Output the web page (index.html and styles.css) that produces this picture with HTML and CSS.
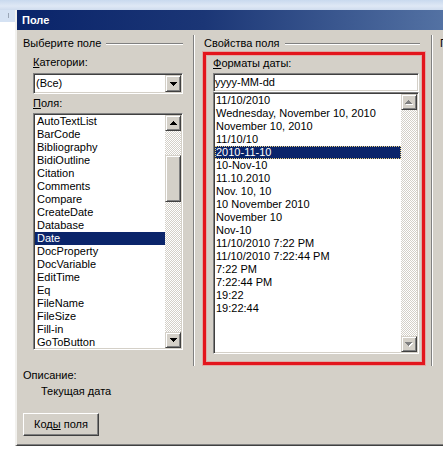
FILE: index.html
```html
<!DOCTYPE html>
<html>
<head>
<meta charset="utf-8">
<link rel="stylesheet" href="styles.css">
</head>
<body>
<div class="topstrip"></div>
<div class="row">
  <div class="parent-side"><span class="tick"></span></div>
  <div class="dialog">
    <div class="titlebar">Поле</div>
    <div class="main">
      <div class="col-left">
        <div class="group-head"><span>Выберите поле</span><i class="etch"></i></div>
        <div class="left-body">
          <div class="label first"><u>К</u>атегории:</div>
          <div class="combo">
            <span class="combo-val">(Все)</span>
            <span class="sbtn cbtn"><svg width="7" height="4" viewBox="0 0 7 4"><path d="M0 0h7v1H6v1H5v1H4v1H3V3H2V2H1V1H0z"/></svg></span>
          </div>
          <div class="label"><u>П</u>оля:</div>
          <div class="listbox left-list">
            <div class="items pl2">
              <div class="item">AutoTextList</div>
              <div class="item">BarCode</div>
              <div class="item">Bibliography</div>
              <div class="item">BidiOutline</div>
              <div class="item">Citation</div>
              <div class="item">Comments</div>
              <div class="item">Compare</div>
              <div class="item">CreateDate</div>
              <div class="item">Database</div>
              <div class="item sel">Date</div>
              <div class="item">DocProperty</div>
              <div class="item">DocVariable</div>
              <div class="item">EditTime</div>
              <div class="item">Eq</div>
              <div class="item">FileName</div>
              <div class="item">FileSize</div>
              <div class="item">Fill-in</div>
              <div class="item">GoToButton</div>
            </div>
            <div class="vscroll">
              <span class="sbtn"><svg width="7" height="4" viewBox="0 0 7 4"><path d="M3 0h1v1h1v1h1v1h1v1H0V3h1V2h1V1h1z"/></svg></span>
              <span class="track"><span class="thumb"></span></span>
              <span class="sbtn"><svg width="7" height="4" viewBox="0 0 7 4"><path d="M0 0h7v1H6v1H5v1H4v1H3V3H2V2H1V1H0z"/></svg></span>
            </div>
          </div>
        </div>
      </div>
      <div class="vsep"></div>
      <div class="col-right">
        <div class="group-head rh"><span>Свойства поля</span><i class="etch"></i></div>
        <div class="redbox">
          <div class="label top"><u>Ф</u>орматы даты:</div>
          <div class="textbox">yyyy-MM-dd</div>
          <div class="listbox right-list">
            <div class="items pl1">
              <div class="item">11/10/2010</div>
              <div class="item">Wednesday, November 10, 2010</div>
              <div class="item">November 10, 2010</div>
              <div class="item">11/10/10</div>
              <div class="item sel focus">2010-11-10</div>
              <div class="item">10-Nov-10</div>
              <div class="item">11.10.2010</div>
              <div class="item">Nov. 10, 10</div>
              <div class="item">10 November 2010</div>
              <div class="item">November 10</div>
              <div class="item">Nov-10</div>
              <div class="item">11/10/2010 7:22 PM</div>
              <div class="item">11/10/2010 7:22:44 PM</div>
              <div class="item">7:22 PM</div>
              <div class="item">7:22:44 PM</div>
              <div class="item">19:22</div>
              <div class="item">19:22:44</div>
            </div>
            <div class="vscroll">
              <span class="sbtn"><svg width="8" height="5" viewBox="0 0 8 5"><path fill="#fff" d="M4 1h1v1h1v1h1v1h1v1H1V4h1V3h1V2h1z"/><path fill="#808080" d="M3 0h1v1h1v1h1v1h1v1H0V3h1V2h1V1h1z"/></svg></span>
              <span class="track"></span>
              <span class="sbtn"><svg width="8" height="5" viewBox="0 0 8 5"><path fill="#fff" d="M1 1h7v1H7v1H6v1H5v1H4V4H3V3H2V2H1z"/><path fill="#808080" d="M0 0h7v1H6v1H5v1H4v1H3V3H2V2H1V1H0z"/></svg></span>
            </div>
          </div>
        </div>
      </div>
      <div class="vsep"></div>
      <div class="col-third">
        <div class="group-head"><span>Параметры поля</span></div>
      </div>
    </div>
    <div class="bottom">
      <div class="desc-label">Описание:</div>
      <div class="desc-text">Текущая дата</div>
      <div class="button">Код<u>ы</u> поля</div>
    </div>
  </div>
</div>
</body>
</html>
```

FILE: styles.css
```css
* { box-sizing: border-box; }
html, body { margin: 0; padding: 0; }
body {
  width: 443px;
  height: 455px;
  overflow: hidden;
  background: #fff;
  font-family: "Liberation Sans", Arial, sans-serif;
  font-size: 11px;
  line-height: 13px;
  color: #000;
}
u { text-decoration: underline; text-underline-offset: 1px; }

.topstrip {
  height: 10px;
  background: linear-gradient(#c9d9ee, #dfe8f5 60%, #cfdcee);
}
.row { display: flex; align-items: flex-start; }
.parent-side {
  width: 15px;
  height: 12px;
  flex: none;
  background: #d5e2f3;
  padding: 3px 0 0 8px;
}
.tick { display: block; width: 1px; height: 5px; background: #9aa6b6; }

.dialog {
  width: 470px;
  flex: none;
  background: #d4d0c8;
  border-left: 2px solid #f2f1ee;
  border-bottom: 1px solid #404040;
}
.titlebar {
  height: 20px;
  line-height: 20px;
  padding-left: 5px;
  color: #fff;
  font-weight: bold;
  background: linear-gradient(to right, #0a246a 0%, #1b3676 40%, #5d7cab 100%);
}

.main { display: flex; height: 336px; }

.group-head {
  display: flex;
  align-items: center;
  height: 13px;
  gap: 5px;
  white-space: nowrap;
}
.etch {
  flex: 1;
  height: 2px;
  border-top: 1px solid #808080;
  border-bottom: 1px solid #fff;
}
.vsep {
  width: 2px;
  flex: none;
  margin-top: 5px;
  border-left: 1px solid #808080;
  border-right: 1px solid #fff;
}

.col-left { width: 176px; flex: none; padding: 7px 10px 0 6px; }
.left-body { padding-left: 10px; }
.label { margin-top: 3px; height: 13px; white-space: nowrap; }
.label.first { margin-top: 6px; }
.label.top { margin-top: 0; }

.combo {
  margin-top: 4px;
  height: 21px;
  display: flex;
  background: #fff;
  padding: 1px;
  border: 1px solid;
  border-color: #808080 #fff #fff #808080;
  box-shadow: inset 1px 1px #404040, inset -1px -1px #d4d0c8;
}
.combo-val { flex: 1; padding-left: 1px; line-height: 17px; }
.sbtn {
  flex: none;
  width: 16px;
  height: 16px;
  display: flex;
  align-items: center;
  justify-content: center;
  background: #d4d0c8;
  border: 1px solid;
  border-color: #d4d0c8 #404040 #404040 #d4d0c8;
  box-shadow: inset 1px 1px #fff, inset -1px -1px #808080;
}
.sbtn.cbtn { height: 17px; }

.listbox {
  display: flex;
  background: #fff;
  padding: 1px;
  border: 1px solid;
  border-color: #808080 #fff #fff #808080;
  box-shadow: inset 1px 1px #404040, inset -1px -1px #d4d0c8;
}
.left-list { margin-top: 3px; height: 237px; }
.items { flex: 1; overflow: hidden; min-width: 0; }
.item { height: 13px; white-space: nowrap; }
.pl2 .item { padding-left: 2px; }
.pl1 .item { padding-left: 1px; }
.item.sel { background: #0a246a; color: #fff; }
.item.focus { outline: 1px dotted #e8cf7c; outline-offset: -1px; }

.vscroll { width: 16px; flex: none; display: flex; flex-direction: column; }
.track {
  flex: 1;
  display: block;
  background-color: #fff;
  background-image: repeating-conic-gradient(#d4d0c8 0 25%, #fff 0 50%);
  background-size: 2px 2px;
}
.thumb {
  display: block;
  margin-top: 24px;
  height: 47px;
  background: #d4d0c8;
  border: 1px solid;
  border-color: #d4d0c8 #404040 #404040 #d4d0c8;
  box-shadow: inset 1px 1px #fff, inset -1px -1px #808080;
}

.col-right { width: 236px; flex: none; padding: 7px 6px 0 8px; }
.group-head.rh { padding-left: 1px; margin-right: 5px; }
.redbox {
  margin-top: 2px;
  height: 313px;
  border: 3px solid #e3151d;
  box-shadow: 0 0 0 1px rgba(240, 120, 120, 0.45), inset 0 0 0 1px rgba(240, 120, 120, 0.4);
  padding: 2px 3px 0 7px;
}
.textbox {
  margin-top: 3px;
  width: 206px;
  height: 19px;
  line-height: 15px;
  padding: 1px 1px;
  background: #fff;
  border: 1px solid;
  border-color: #808080 #fff #fff #808080;
  box-shadow: inset 1px 1px #404040, inset -1px -1px #d4d0c8;
}
.right-list { width: 206px; height: 262px; }

.col-third { flex: 1; padding: 7px 0 0 7px; overflow: hidden; }

.bottom {
  padding: 3px 0 8px 6px;
  border-bottom: 1px solid #808080;
}
.desc-label { height: 13px; }
.desc-text { height: 13px; margin-top: 3px; padding-left: 18px; }
.button {
  margin-top: 15px;
  width: 76px;
  height: 23px;
  line-height: 21px;
  text-align: center;
  background: #d4d0c8;
  border: 1px solid;
  border-color: #fff #404040 #404040 #fff;
  box-shadow: inset -1px -1px #808080;
}
```
